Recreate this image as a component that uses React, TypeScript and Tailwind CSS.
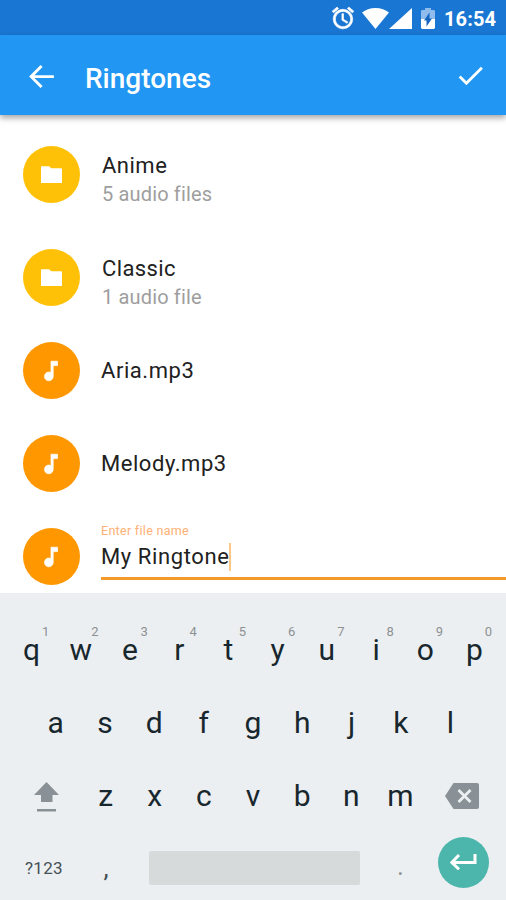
import type { ReactNode } from 'react'

const folders = [
  { name: 'Anime', detail: '5 audio files', tracking: 'tracking-[0.5px]' },
  { name: 'Classic', detail: '1 audio file', tracking: 'tracking-[0.4px]' },
]

const songs = ['Aria.mp3', 'Melody.mp3']

const topRow = ['q', 'w', 'e', 'r', 't', 'y', 'u', 'i', 'o', 'p']
const middleRow = ['a', 's', 'd', 'f', 'g', 'h', 'j', 'k', 'l']
const bottomRow = ['z', 'x', 'c', 'v', 'b', 'n', 'm']

function StatusBar() {
  return (
    <div className="flex h-[35px] items-center bg-[#1976d2] pl-[330px] text-white">
      <svg viewBox="0 0 24 24" className="mt-[1px] h-[26px] w-[26px] shrink-0" fill="currentColor" stroke="currentColor" strokeWidth="0.6">
        <path d="M22 5.72l-4.6-3.86-1.29 1.53 4.6 3.86L22 5.72zM7.88 3.39L6.6 1.86 2 5.71l1.29 1.53 4.59-3.85zM12.5 8H11v6l4.75 2.85.75-1.23-4-2.37V8zM12 4c-4.97 0-9 4.03-9 9s4.02 9 9 9a9 9 0 000-18zm0 16c-3.87 0-7-3.13-7-7s3.13-7 7-7 7 3.13 7 7-3.13 7-7 7z" />
      </svg>
      <svg viewBox="0 0 27 21" className="mt-px ml-[6px] h-[21px] w-[27px] shrink-0" fill="currentColor">
        <path d="M0 4.600C3.500 1.800 8 0 13.500 0S23.500 1.800 27 4.600L13.500 21z" />
      </svg>
      <svg viewBox="0 0 23 21" className="mt-[2px] h-[21px] w-[23px] shrink-0" fill="currentColor">
        <path d="M23 0v21H0z" />
      </svg>
      <svg viewBox="0 0 14 21" className="mt-[2px] ml-[9px] h-[21px] w-[14px] shrink-0">
        <path fill="#8fbcec" d="M1.400 2H4V0h6v2h2.600c.8 0 1.400.6 1.400 1.400V11H0V3.400C0 2.600.6 2 1.400 2z" />
        <path fill="white" d="M0 11h14v8.600c0 .8-.6 1.400-1.400 1.400H1.400C.6 21 0 20.400 0 19.600z" />
        <path fill="#1565c0" d="M8.500 4.500v6H11L5.500 18.500v-6H3z" />
      </svg>
      <span className="mt-[3px] ml-[9px] text-[20px] leading-none font-bold tracking-[0.1px]">16:54</span>
    </div>
  )
}

function AppBar() {
  return (
    <header className="relative flex h-20 items-center bg-[#2196f3] pr-[19px] pl-[25px] text-white shadow-[0_3px_6px_rgba(0,0,0,0.35)]">
      <svg viewBox="0 0 24 24" className="mt-[2px] h-[33px] w-[33px]" fill="currentColor">
        <path d="M21 11H6.900l5.900-5.900L11.300 3.700 3 12l8.300 8.300 1.500-1.400L6.900 13H21z" />
      </svg>
      <h1 className="mt-[8px] ml-[27px] text-[28px] leading-none font-medium">Ringtones</h1>
      <svg viewBox="0 0 24 24" className="mt-px ml-auto h-[33px] w-[33px]" fill="currentColor">
        <path d="M9 16.170L4.830 12l-1.420 1.410L9 19 21 7l-1.410-1.410z" />
      </svg>
    </header>
  )
}

function Avatar({ kind }: { kind: 'folder' | 'song' }) {
  if (kind === 'folder') {
    return (
      <span className="flex h-[57px] w-[57px] shrink-0 items-center justify-center rounded-full bg-[#ffc107]">
        <svg viewBox="0 0 22 18" className="h-[17.500px] w-[21px]" fill="white">
          <path d="M1 0h7.500l2.200 2.200H21q1 0 1 1V17q0 1-1 1H1q-1 0-1-1V1q0-1 1-1z" />
        </svg>
      </span>
    )
  }

  return (
    <span className="flex h-[57px] w-[57px] shrink-0 items-center justify-center rounded-full bg-[#ff9800] pr-px">
      <svg viewBox="0 0 24 24" className="h-[26px] w-[26px]" fill="white" stroke="white" strokeWidth="0.7">
        <path d="M12 3v10.550c-.59-.34-1.270-.55-2-.55-2.210 0-4 1.790-4 4s1.790 4 4 4 4-1.790 4-4V7h4V3h-6z" />
      </svg>
    </span>
  )
}

function FileList() {
  return (
    <main className="h-[478px] overflow-hidden bg-white pt-[31px] pl-[23px] text-[#212121]">
      <ul className="flex flex-col gap-[46px]">
        {folders.map((folder) => (
          <li key={folder.name} className="flex h-[57px] items-center">
            <Avatar kind="folder" />
            <div className="ml-[22px] pt-[10px]">
              <p className={`text-[22px] leading-7 ${folder.tracking}`}>{folder.name}</p>
              <p className="text-[20px] leading-7 tracking-[0.15px] text-[#9e9e9e]">{folder.detail}</p>
            </div>
          </li>
        ))}
      </ul>
      <ul className="mt-9 flex flex-col gap-9">
        {songs.map((song) => (
          <li key={song} className="flex h-[57px] items-center">
            <Avatar kind="song" />
            <p className="ml-[21px] text-[22px] leading-7 tracking-[0.550px]">{song}</p>
          </li>
        ))}
        <li className="flex h-[57px] items-start">
          <Avatar kind="song" />
          <div className="-mt-[5px] ml-[21px] flex-1">
            <p className="text-[12.500px] leading-4 tracking-[0.3px] text-[#ffb074]">Enter file name</p>
            <div className="flex h-[41px] items-start border-b-[3px] border-[#f39a2b] pt-1">
              <span className="text-[22px] leading-7 tracking-[0.6px]">My Ringtone</span>
              <span className="h-7 w-[1.500px] bg-[#ffc887]" />
            </div>
          </div>
        </li>
      </ul>
    </main>
  )
}

function Key({ label, hint }: { label: ReactNode; hint?: number }) {
  return (
    <button className="relative flex h-full flex-1 items-center justify-center text-[30px] leading-none">
      {label}
      {hint !== undefined && (
        <span className="absolute top-3 left-[35px] text-[13px] leading-none text-[#8d9194]">{hint}</span>
      )}
    </button>
  )
}

function Keyboard() {
  return (
    <div className="h-[307px] bg-[#eceff1] pt-5 text-[#18272e]">
      <div className="flex h-[73px] px-[7px]">
        {topRow.map((letter, i) => (
          <Key key={letter} label={letter} hint={(i + 1) % 10} />
        ))}
      </div>
      <div className="flex h-[73px] px-[31px]">
        {middleRow.map((letter) => (
          <Key key={letter} label={letter} />
        ))}
      </div>
      <div className="flex h-[73px]">
        <button className="flex w-[81px] items-center pl-[34px]">
          <svg viewBox="0 0 25 30" className="mt-[2px] h-[30px] w-[25px]" fill="#899196">
            <path d="M12.500 0L25 13h-6.500v7H7v-7H0zM3 27h19v2.600H3z" />
          </svg>
        </button>
        {bottomRow.map((letter) => (
          <Key key={letter} label={letter} />
        ))}
        <button className="flex w-[81px] items-center pl-[20px]">
          <svg viewBox="0 0 34 26" className="h-[26px] w-[34px]">
            <path fill="#899196" d="M8.500 0H32q2 0 2 2v22q0 2-2 2H8.500L0 13z" />
            <path stroke="#eceff1" strokeWidth="2.800" d="M13.500 7l12 12M25.500 7l-12 12" />
          </svg>
        </button>
      </div>
      <div className="flex h-[68px] items-center text-[#455056]">
        <button className="w-[81px] pt-[6px] pl-[25px] text-left text-[17px] tracking-[0.3px]">?123</button>
        <button className="w-[50px] pt-1 text-center text-[26px] leading-none">,</button>
        <button className="mt-[3px] ml-[18px] h-[34px] w-[211px] rounded-[2px] bg-[#d6dadb]" />
        <button className="w-[81px] text-center text-[26px] leading-none text-[#8d9194]">.</button>
        <button className="-mt-[8px] -ml-[3px] flex h-[51px] w-[51px] items-center justify-center rounded-full bg-[#4db6ac]">
          <svg viewBox="0 0 27 16" className="h-4 w-[27px]" fill="none" stroke="white" strokeWidth="3">
            <path d="M25 0v8.500H2M9 1L1.800 8.500 9 15.300" />
          </svg>
        </button>
      </div>
    </div>
  )
}

export default function App() {
  return (
    <div className="h-[900px] w-[506px] overflow-hidden bg-white font-[Roboto,sans-serif]">
      <StatusBar />
      <AppBar />
      <FileList />
      <Keyboard />
    </div>
  )
}
